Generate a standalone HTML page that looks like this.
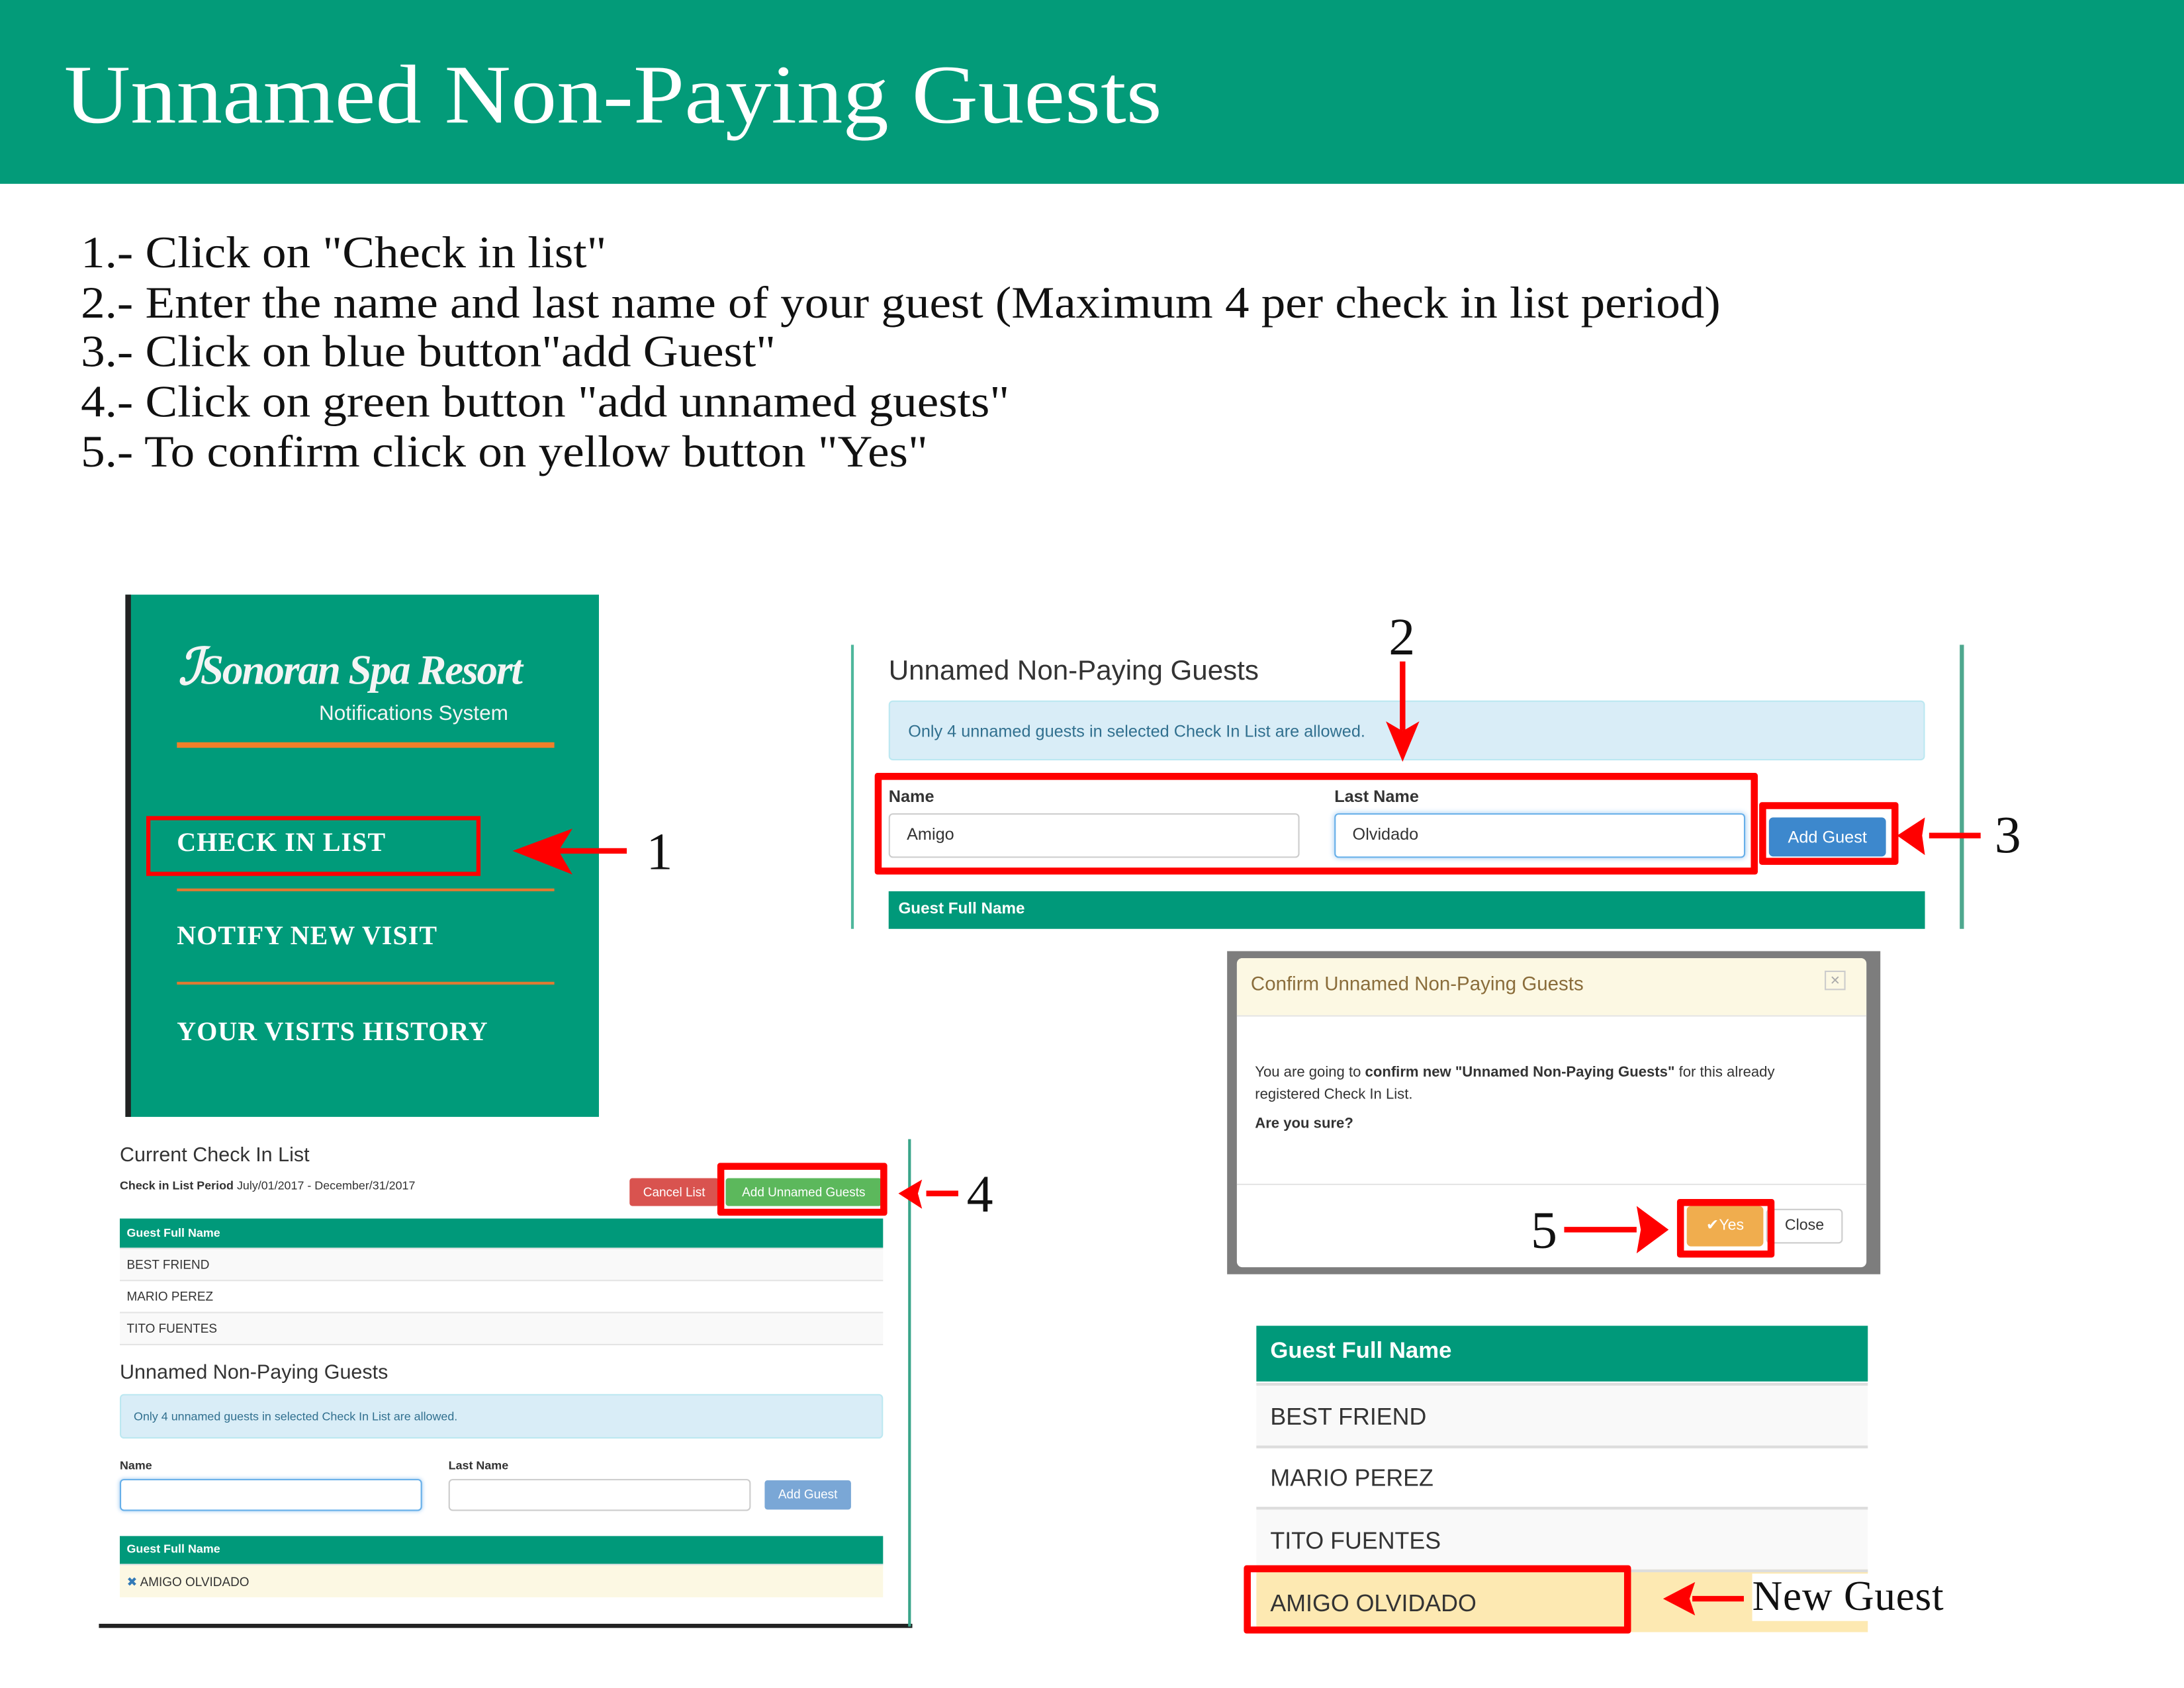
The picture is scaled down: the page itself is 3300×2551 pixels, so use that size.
<!DOCTYPE html>
<html><head><meta charset="utf-8"><style>
*{margin:0;padding:0;box-sizing:border-box}
html,body{width:3300px;height:2550px;overflow:hidden;background:#fff}
#w{position:absolute;left:0;top:0;width:1568px;height:1212px;transform:scale(2.10459);transform-origin:0 0;font-family:"Liberation Sans",sans-serif;color:#333}
.a{position:absolute}
.serif{font-family:"Liberation Serif",serif}
.rb{position:absolute;border:5px solid #f00;border-radius:2px}
.g{background:#00997a;color:#fff;font-weight:bold}
.inp{position:absolute;background:#fff;border:1px solid #ccc;border-radius:3px;font-size:12px;padding:7px 12px}
.nav{position:absolute;left:127px;font-family:"Liberation Serif",serif;font-weight:bold;color:#fff;font-size:19px;letter-spacing:.5px}
.row{position:absolute;font-size:9px;padding-left:5px;border-top:1px solid #e4e4e4}
.row6{position:absolute;left:902px;width:439px;font-size:17px;padding-left:10px;border-top:2px solid #ddd;background:#f9f9f9}
</style></head><body><div id="w">
<div class="a" style="left:0;top:0;width:1568px;height:132px;background:#039b79"></div>
<div class="a serif" style="left:46px;top:32px;font-size:60px;color:#fff;line-height:72px;transform:scaleX(1.1);transform-origin:0 0;white-space:nowrap">Unnamed Non-Paying Guests</div>
<div class="a serif" style="left:58px;top:164px;font-size:32px;line-height:35.7px;color:#111;transform:scaleX(1.085);transform-origin:0 0;white-space:nowrap">1.- Click on "Check in list"<br>2.- Enter the name and last name of your guest (Maximum 4 per check in list period)<br>3.- Click on blue button"add Guest"<br>4.- Click on green button "add unnamed guests"<br>5.- To confirm click on yellow button "Yes"</div>

<!-- panel 1 -->
<div class="a" style="left:90px;top:427px;width:340px;height:375px;background:#009b7a;border-left:4px solid #222"></div>
<div class="a serif" style="left:128px;top:458px;font-size:36px;font-style:italic;font-weight:bold;color:#f4f4f4;white-space:nowrap;letter-spacing:-1px">ℐ<span style="font-size:30px">Sonoran Spa Resort</span></div>
<div class="a" style="left:229px;top:504px;font-size:15px;color:#f4f4f4">Notifications System</div>
<div class="a" style="left:127px;top:533px;width:271px;height:4px;background:#f07f2a"></div>
<div class="a" style="left:127px;top:638px;width:271px;height:2px;background:#e07a32"></div>
<div class="a" style="left:127px;top:705px;width:271px;height:2px;background:#e07a32"></div>
<div class="nav" style="top:595px">CHECK IN LIST</div>
<div class="nav" style="top:662px">NOTIFY NEW VISIT</div>
<div class="nav" style="top:731px">YOUR VISITS HISTORY</div>
<div class="a" style="left:105px;top:586px;width:240px;height:43px;border:3px solid #f00"></div>
<div class="a serif" style="left:464px;top:590px;font-size:38px;color:#111">1</div>

<!-- panel 2 -->
<div class="a" style="left:611px;top:463px;width:2px;height:204px;background:#4fb79c"></div>
<div class="a" style="left:1407px;top:463px;width:3px;height:204px;background:#4fa88f"></div>
<div class="a" style="left:638px;top:471px;font-size:20px;color:#333">Unnamed Non-Paying Guests</div>
<div class="a" style="left:638px;top:503px;width:744px;height:43px;background:#d9edf7;border:1px solid #bce8f1;border-radius:3px;color:#31708f;font-size:12px;padding:14px 13px">Only 4 unnamed guests in selected Check In List are allowed.</div>
<div class="a" style="left:638px;top:565px;font-size:12px;font-weight:bold">Name</div>
<div class="a" style="left:958px;top:565px;font-size:12px;font-weight:bold">Last Name</div>
<div class="inp" style="left:638px;top:584px;width:295px;height:32px">Amigo</div>
<div class="inp" style="left:958px;top:584px;width:295px;height:32px;border-color:#66afe9;box-shadow:0 0 4px #9cc8f0">Olvidado</div>
<div class="rb" style="left:628px;top:555px;width:634px;height:73px"></div>
<div class="a" style="left:1270px;top:587px;width:84px;height:28px;background:#3d88cd;color:#fff;font-size:12px;text-align:center;line-height:28px;border-radius:3px">Add Guest</div>
<div class="rb" style="left:1263px;top:576px;width:100px;height:45px"></div>
<div class="a g" style="left:638px;top:640px;width:744px;height:27px;font-size:11.5px;padding:7px 7px">Guest Full Name</div>
<div class="a serif" style="left:997px;top:436px;font-size:38px;color:#111">2</div>
<div class="a serif" style="left:1432px;top:578px;font-size:38px;color:#111">3</div>

<!-- panel 4 -->
<div class="a" style="left:71px;top:1166px;width:584px;height:3px;background:#222"></div>
<div class="a" style="left:652px;top:818px;width:2px;height:350px;background:#3aa58a"></div>
<div class="a" style="left:86px;top:822px;font-size:14.5px">Current Check In List</div>
<div class="a" style="left:86px;top:846px;font-size:8.5px"><b>Check in List Period</b> July/01/2017 - December/31/2017</div>
<div class="a" style="left:452px;top:846px;width:64px;height:20px;background:#d9534f;color:#fff;font-size:9px;text-align:center;line-height:20px;border-radius:2px">Cancel List</div>
<div class="a" style="left:521px;top:846px;width:112px;height:20px;background:#5cb85c;color:#fff;font-size:9px;text-align:center;line-height:20px;border-radius:2px">Add Unnamed Guests</div>
<div class="rb" style="left:515px;top:835px;width:122px;height:38px"></div>
<div class="a serif" style="left:694px;top:836px;font-size:38px;color:#111">4</div>
<div class="a g" style="left:86px;top:875px;width:548px;height:21px;font-size:8.5px;padding:5px 5px">Guest Full Name</div>
<div class="row" style="left:86px;width:548px;top:896px;height:23px;line-height:23px;background:#f9f9f9">BEST FRIEND</div>
<div class="row" style="left:86px;width:548px;top:919px;height:23px;line-height:23px">MARIO PEREZ</div>
<div class="row" style="left:86px;width:548px;top:942px;height:24px;line-height:23px;background:#f9f9f9;border-bottom:1px solid #e4e4e4">TITO FUENTES</div>
<div class="a" style="left:86px;top:978px;font-size:14.5px">Unnamed Non-Paying Guests</div>
<div class="a" style="left:86px;top:1001px;width:548px;height:32px;background:#d9edf7;border:1px solid #bce8f1;border-radius:3px;color:#31708f;font-size:8.5px;padding:10px 9px">Only 4 unnamed guests in selected Check In List are allowed.</div>
<div class="a" style="left:86px;top:1047px;font-size:8.5px;font-weight:bold">Name</div>
<div class="a" style="left:322px;top:1047px;font-size:8.5px;font-weight:bold">Last Name</div>
<div class="inp" style="left:86px;top:1062px;width:217px;height:23px;border-color:#66afe9;box-shadow:0 0 3px #9cc8f0"></div>
<div class="inp" style="left:322px;top:1062px;width:217px;height:23px"></div>
<div class="a" style="left:549px;top:1063px;width:62px;height:21px;background:#7aa7d6;color:#fff;font-size:9px;text-align:center;line-height:21px;border-radius:2px">Add Guest</div>
<div class="a g" style="left:86px;top:1103px;width:548px;height:20px;font-size:8.5px;padding:4px 5px">Guest Full Name</div>
<div class="row" style="left:86px;width:548px;top:1123px;height:24px;line-height:24px;background:#fcf8e3"><span style="color:#337ab7">✖</span> AMIGO OLVIDADO</div>

<!-- panel 5 -->
<div class="a" style="left:881px;top:683px;width:469px;height:232px;background:#7d7d7d"></div>
<div class="a" style="left:888px;top:688px;width:452px;height:222px;background:#fff;border-radius:4px;overflow:hidden">
 <div style="height:42px;background:#fcf8e3;border-bottom:1px solid #e5e5e5;color:#8a6d3b;font-size:14px;padding:10px 10px">Confirm Unnamed Non-Paying Guests</div>
 <div class="a" style="left:422px;top:9px;width:15px;height:14px;border:1px solid #ccc;color:#aaa;font-size:9px;text-align:center;line-height:12px">✕</div>
 <div class="a" style="left:13px;top:74px;font-size:10.5px;line-height:16px;width:420px">You are going to <b>confirm new "Unnamed Non-Paying Guests"</b> for this already registered Check In List.</div>
 <div class="a" style="left:13px;top:113px;font-size:10.5px;font-weight:bold">Are you sure?</div>
 <div class="a" style="left:0;top:162px;width:452px;height:1px;background:#e5e5e5"></div>
 <div class="a" style="left:323px;top:178px;width:55px;height:29px;background:#f0ad4e;color:#fff;font-size:11px;text-align:center;line-height:29px;border-radius:3px">✔Yes</div>
 <div class="a" style="left:380px;top:180px;width:55px;height:25px;border:1px solid #ccc;font-size:11px;text-align:center;line-height:23px;border-radius:3px">Close</div>
</div>
<div class="rb" style="left:1204px;top:861px;width:70px;height:42px"></div>
<div class="a serif" style="left:1099px;top:862px;font-size:38px;color:#111">5</div>

<!-- panel 6 -->
<div class="a g" style="left:902px;top:952px;width:439px;height:40px;font-size:16.5px;padding:9px 10px">Guest Full Name</div>
<div class="row6" style="top:993px;height:45px;line-height:45px">BEST FRIEND</div>
<div class="row6" style="top:1038px;height:44px;line-height:44px;background:#fff">MARIO PEREZ</div>
<div class="row6" style="top:1082px;height:45px;line-height:45px">TITO FUENTES</div>
<div class="row6" style="top:1127px;height:45px;line-height:45px;background:#fde9b2">AMIGO OLVIDADO</div>
<div class="rb" style="left:893px;top:1124px;width:278px;height:49px"></div>
<div class="a serif" style="left:1258px;top:1130px;font-size:30px;color:#111;background:#fff;padding-right:4px;letter-spacing:.4px">New Guest</div>

<svg class="a" style="left:0;top:0" width="1568" height="1212" viewBox="0 0 1568 1212">
<g fill="#f00" stroke="#f00" stroke-width="4">
<line x1="450" y1="611" x2="395" y2="611"/><polygon stroke="none" points="368,611 411,595 401,611 411,628"/>
<line x1="1007" y1="475" x2="1007" y2="525"/><polygon stroke="none" points="1007,547 995,518 1007,525 1019,518"/>
<line x1="1422" y1="600" x2="1385" y2="600"/><polygon stroke="none" points="1362,600 1382,587 1380,600 1382,614"/>
<line x1="688" y1="857" x2="665" y2="857"/><polygon stroke="none" points="645,857 662,847 659,857 662,868"/>
<line x1="1123" y1="883" x2="1175" y2="883"/><polygon stroke="none" points="1198,883 1175,866 1178,883 1175,900"/>
<line x1="1252" y1="1148" x2="1215" y2="1148"/><polygon stroke="none" points="1194,1148 1217,1136 1213,1148 1217,1160"/>
</g></svg>
</div></body></html>
